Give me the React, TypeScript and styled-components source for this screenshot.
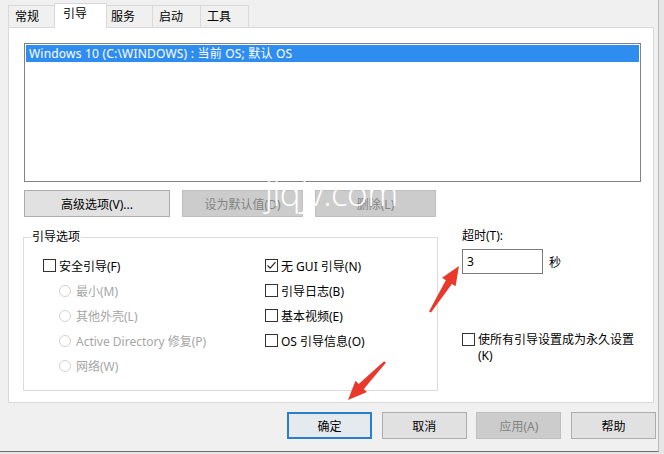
import React from 'react';
import styled, { createGlobalStyle, css } from 'styled-components';

const GlobalStyle = createGlobalStyle`
  html, body {
    margin: 0;
    padding: 0;
    background: #e6e6e6;
  }
  body {
    font-family: 'Noto Sans', 'Noto Sans CJK SC', sans-serif;
    font-size: 12px;
    color: #000;
  }
`;

type Point = [number, number];

// tapered annotation arrow, computed from tail to tip
const arrowPoints = (tail: Point, tip: Point): string => {
  const dx = tip[0] - tail[0];
  const dy = tip[1] - tail[1];
  const len = Math.hypot(dx, dy);
  const ux = dx / len;
  const uy = dy / len;
  const nx = -uy;
  const ny = ux;
  const headLen = 19;
  const base: Point = [tip[0] - ux * headLen, tip[1] - uy * headLen];
  const at = (p: Point, w: number): string =>
    `${(p[0] + nx * w).toFixed(1)},${(p[1] + ny * w).toFixed(1)}`;
  return [
    at(tail, 1.2),
    at(base, 3.6),
    at(base, 8),
    `${tip[0]},${tip[1]}`,
    at(base, -8),
    at(base, -3.6),
    at(tail, -1.2),
  ].join(' ');
};

const tabs = ['常规', '引导', '服务', '启动', '工具'];

const leftOptions = ['最小(M)', '其他外壳(L)', 'Active Directory 修复(P)', '网络(W)'];

const rightOptions = [
  { label: '无 GUI 引导(N)', checked: true },
  { label: '引导日志(B)', checked: false },
  { label: '基本视频(E)', checked: false },
  { label: 'OS 引导信息(O)', checked: false },
];

const CheckBox: React.FC<{ checked?: boolean }> = ({ checked }) => (
  <Box>
    {checked && (
      <svg width="11" height="11" viewBox="0 0 11 11">
        <path d="M1.5 5.5 L4.2 8.2 L9.5 2.2" fill="none" stroke="#222" strokeWidth="1.2" />
      </svg>
    )}
  </Box>
);

const App: React.FC = () => {
  return (
    <Window>
      <GlobalStyle />
      <TabStrip>
        {tabs.map((t) => (
          <Tab key={t} $active={t === '引导'}>
            {t}
          </Tab>
        ))}
      </TabStrip>

      <Panel>
        <ListBox>
          <ListItem $selected>Windows 10 (C:\WINDOWS) : 当前 OS; 默认 OS</ListItem>
        </ListBox>

        <ButtonRow>
          <Button $width={146}>高级选项(V)...</Button>
          <Button $width={121} disabled>
            设为默认值(D)
          </Button>
          <Button $width={121} disabled>
            删除(L)
          </Button>
        </ButtonRow>

        <OptionsArea>
          <GroupBox>
            <Legend>引导选项</Legend>
            <GroupGrid>
              <Column>
                <OptionRow>
                  <CheckBox />
                  <span>安全引导(F)</span>
                </OptionRow>
                {leftOptions.map((o) => (
                  <OptionRow key={o} $indent $disabled>
                    <Radio />
                    <span>{o}</span>
                  </OptionRow>
                ))}
              </Column>
              <Column>
                {rightOptions.map((o) => (
                  <OptionRow key={o.label}>
                    <CheckBox checked={o.checked} />
                    <span>{o.label}</span>
                  </OptionRow>
                ))}
              </Column>
            </GroupGrid>
          </GroupBox>

          <TimeoutColumn>
            <Caption>超时(T):</Caption>
            <TimeoutRow>
              <TextInput>3</TextInput>
              <span>秒</span>
            </TimeoutRow>
            <PermanentRow>
              <CheckBox />
              <WrapText>使所有引导设置成为永久设置(K)</WrapText>
            </PermanentRow>
          </TimeoutColumn>
        </OptionsArea>
      </Panel>

      <Footer>
        <Button $width={85} $default>
          确定
        </Button>
        <Button $width={85}>取消</Button>
        <Button $width={85} disabled>
          应用(A)
        </Button>
        <Button $width={85}>帮助</Button>
      </Footer>

      <Watermark>jiqjv.com</Watermark>

      <Arrows width="664" height="454" viewBox="0 0 664 454">
        <polygon points={arrowPoints([430, 312], [459, 266])} fill="#e8392c" />
        <polygon points={arrowPoints([385, 362], [348, 400])} fill="#e8392c" />
      </Arrows>
    </Window>
  );
};

export default App;

const Window = styled('div')`
  position: relative;
  width: 658px;
  height: 451px;
  background: #f0f0f0;
  border-right: 1px solid #b9b9b9;
  border-bottom: 1px solid #6f6f6f;
  overflow: hidden;
`;

const TabStrip = styled('div')`
  display: flex;
  align-items: flex-end;
  height: 27px;
  padding-left: 8px;
  position: relative;
  z-index: 1;
`;

const Tab = styled('div')<{ $active?: boolean }>`
  width: 49px;
  height: 22px;
  box-sizing: border-box;
  padding-left: 6px;
  display: flex;
  align-items: center;
  border: 1px solid #d9d9d9;
  border-bottom: none;
  margin-left: -1px;
  background: #f0f0f0;
  line-height: 14px;
  &:first-child {
    margin-left: 0;
  }
  ${(p) =>
    p.$active &&
    css`
      width: 53px;
      height: 25px;
      padding-left: 8px;
      padding-top: 3px;
      margin: 0 -2px -1px -3px;
      background: #fff;
      position: relative;
      z-index: 1;
      align-items: flex-start;
    `}
`;

const Panel = styled('div')`
  margin-left: 8px;
  width: 629px;
  height: 359px;
  background: #fff;
  border: 1px solid #d9d9d9;
  padding: 15px 0 0 15px;
`;

const ListBox = styled('div')`
  width: 613px;
  height: 135px;
  border: 1px solid #828282;
  padding: 1px;
`;

const ListItem = styled('div')<{ $selected?: boolean }>`
  height: 17px;
  line-height: 17px;
  padding-left: 3px;
  white-space: nowrap;
  letter-spacing: 0.2px;
  background: ${(p) => (p.$selected ? '#2f8def' : 'transparent')};
  color: ${(p) => (p.$selected ? '#fff' : '#000')};
`;

const ButtonRow = styled('div')`
  display: flex;
  gap: 12px;
  margin-top: 8px;
`;

const Button = styled('button')<{ $width: number; $default?: boolean }>`
  width: ${(p) => p.$width}px;
  height: 27px;
  padding: 0;
  font: inherit;
  font-size: 12px;
  color: #000;
  background: #e1e1e1;
  border: 1px solid #adadad;
  box-sizing: border-box;
  &:disabled {
    background: #cccccc;
    border-color: #bfbfbf;
    color: #838383;
  }
  ${(p) =>
    p.$default &&
    css`
      border: 2px solid #2a7fc9;
      background: #e5eaef;
    `}
`;

const OptionsArea = styled('div')`
  display: flex;
  margin-top: 12px;
  gap: 24px;
`;

const GroupBox = styled('div')`
  position: relative;
  margin-top: 8px;
  margin-left: -1px;
  width: 413px;
  height: 152px;
  border: 1px solid #dcdcdc;
`;

const Legend = styled('span')`
  position: absolute;
  top: -8px;
  left: 7px;
  padding: 0 1px;
  background: #fff;
  line-height: 14px;
`;

const GroupGrid = styled('div')`
  display: grid;
  grid-template-columns: 222px 1fr;
  padding: 15px 0 0 19px;
`;

const Column = styled('div')`
  display: flex;
  flex-direction: column;
`;

const OptionRow = styled('div')<{ $indent?: boolean; $disabled?: boolean }>`
  display: flex;
  align-items: center;
  height: 25px;
  gap: 3px;
  white-space: nowrap;
  padding-left: ${(p) => (p.$indent ? '16px' : '0')};
  color: ${(p) => (p.$disabled ? '#a6a6a6' : '#000')};
  ${(p) =>
    p.$indent &&
    css`
      gap: 5px;
    `}
`;

const Box = styled('span')`
  width: 13px;
  height: 13px;
  box-sizing: border-box;
  border: 1px solid #333;
  background: #fff;
  display: flex;
  align-items: center;
  justify-content: center;
  flex: none;
`;

const Radio = styled('span')`
  width: 12px;
  height: 12px;
  box-sizing: border-box;
  border: 1px solid #d2d2d2;
  border-radius: 50%;
  flex: none;
`;

const TimeoutColumn = styled('div')`
  display: flex;
  flex-direction: column;
`;

const Caption = styled('div')`
  line-height: 14px;
`;

const TimeoutRow = styled('div')`
  display: flex;
  align-items: center;
  gap: 6px;
  margin-top: 6px;
`;

const TextInput = styled('div')`
  width: 81px;
  height: 25px;
  box-sizing: border-box;
  border: 1px solid #7a7a7a;
  padding-left: 4px;
  line-height: 23px;
`;

const PermanentRow = styled('div')`
  display: flex;
  align-items: flex-start;
  gap: 3px;
  margin-top: 59px;
`;

const WrapText = styled('span')`
  width: 160px;
  line-height: 16px;
  margin-top: -1px;
`;

const Footer = styled('div')`
  display: flex;
  justify-content: flex-end;
  gap: 9.67px;
  padding: 9px 2px 0 0;
`;

const Watermark = styled('span')`
  position: absolute;
  left: 265px;
  top: 173px;
  font-family: 'Open Sans', 'DejaVu Sans', sans-serif;
  font-weight: 300;
  font-size: 35px;
  line-height: 40px;
  color: #fff;
  letter-spacing: -0.5px;
  pointer-events: none;
`;

const Arrows = styled('svg')`
  position: absolute;
  left: 0;
  top: 0;
  pointer-events: none;
`;
